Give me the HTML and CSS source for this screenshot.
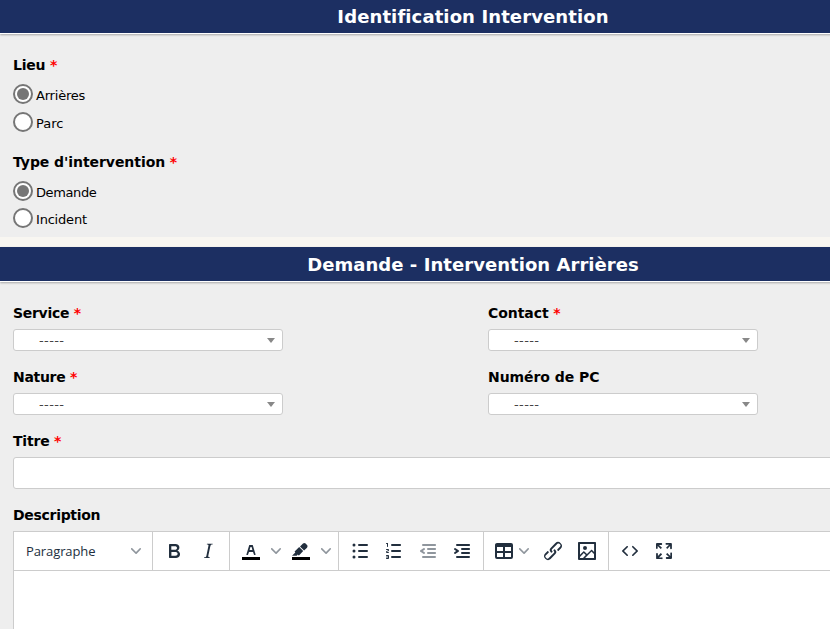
FILE: index.html
```html
<!DOCTYPE html>
<html lang="fr">
<head>
<meta charset="utf-8">
<title>Identification Intervention</title>
<link rel="stylesheet" href="styles.css">
</head>
<body>
<form class="page">
  <section class="panel panel-ident">
    <h2 class="bar bar-first"><span>Identification Intervention</span></h2>
    <div class="fields">
      <div class="label"><span class="snug">Lieu</span> <b class="req">*</b></div>
      <div class="choices">
        <label class="choice"><i class="radio on"></i><span>Arrières</span></label>
        <label class="choice"><i class="radio"></i><span class="wide">Parc</span></label>
      </div>
      <div class="label label-type"><span class="loose">Type d'intervention</span> <b class="req">*</b></div>
      <div class="choices">
        <label class="choice choice-short"><i class="radio on"></i><span class="tight">Demande</span></label>
        <label class="choice choice-short"><i class="radio"></i><span>Incident</span></label>
      </div>
    </div>
  </section>
  <section class="panel">
    <h2 class="bar"><span>Demande - Intervention Arrières</span></h2>
    <div class="fields">
      <div class="grid">
        <div class="field"><div class="label"><span>Service</span> <b class="req">*</b></div><div class="select">-----</div></div>
        <div class="field"><div class="label"><span class="loose">Contact</span> <b class="req">*</b></div><div class="select">-----</div></div>
        <div class="field"><div class="label"><span>Nature</span> <b class="req">*</b></div><div class="select">-----</div></div>
        <div class="field"><div class="label"><span class="loose">Numéro de PC</span></div><div class="select">-----</div></div>
      </div>
      <div class="label"><span class="snug">Titre</span> <b class="req">*</b></div>
      <div class="input"></div>
      <div class="label label-desc"><span>Description</span></div>
      <div class="editor">
        <div class="toolbar">
          <div class="group">
            <div class="format"><span>Paragraphe</span><svg class="chev" viewBox="0 0 10 10"><path d="M8.7 2.2c.3-.3.8-.3 1 0 .4.4.4.9 0 1.2L5.7 7.8c-.3.3-.9.3-1.2 0L.2 3.4a.8.8 0 010-1.2c.3-.3.8-.3 1.1 0L5 6l3.7-3.8z"/></svg></div>
          </div>
          <div class="group">
            <div class="btn"><svg viewBox="0 0 24 24"><path fill-rule="evenodd" d="M7.8 19c-.3 0-.5 0-.6-.2l-.2-.5V5.7c0-.2 0-.4.2-.5l.6-.2h5c1.5 0 2.7.3 3.5 1 .7.6 1.1 1.4 1.1 2.5a3 3 0 01-.6 1.9c-.4.6-1 1-1.6 1.2.4.1.9.3 1.3.6s.8.7 1 1.2c.4.4.5 1 .5 1.6 0 1.3-.4 2.3-1.3 3-.8.7-2.1 1-3.8 1H7.8zm5-8.3c.6 0 1.2-.1 1.6-.5.4-.3.6-.7.6-1.3 0-1.1-.8-1.7-2.3-1.7H9.3v3.5h3.4zm.5 6c.7 0 1.3-.1 1.7-.4.4-.4.6-.9.6-1.5s-.2-1-.7-1.4c-.4-.3-1-.4-2-.4H9.4v3.8h4z"/></svg></div>
            <div class="btn"><svg viewBox="0 0 24 24"><path d="M16.7 4.7l-.1.9h-.3c-.6 0-1 0-1.4.3-.3.3-.4.6-.5 1.1l-2.1 9.8v.6c0 .5.4.8 1.4.8h.2l-.2.8H8l.2-.8h.2c1.1 0 1.8-.5 2-1.5l2-9.8.1-.5c0-.6-.4-.8-1.4-.8h-.3l.2-.9h5.8z"/></svg></div>
          </div>
          <div class="group">
            <div class="btn"><svg viewBox="0 0 24 24"><path fill="#000" d="M3 18h18v3H3z"/><path fill-rule="evenodd" d="M8.7 16h-.8a.5.5 0 01-.5-.6l2.7-9c.1-.3.3-.4.5-.4h2.8c.2 0 .4.1.5.4l2.7 9a.5.5 0 01-.5.6h-.8a.5.5 0 01-.4-.4l-.7-2.2c0-.3-.3-.4-.5-.4h-3.4c-.2 0-.4.1-.5.4l-.7 2.2c0 .3-.2.4-.4.4zm2.6-7.6l-.6 2a.5.5 0 00.5.6h1.6a.5.5 0 00.5-.6l-.6-2c0-.3-.3-.4-.5-.4h-.4c-.2 0-.4.1-.5.4z"/></svg></div>
            <div class="arrow"><svg class="chev" viewBox="0 0 10 10"><path d="M8.7 2.2c.3-.3.8-.3 1 0 .4.4.4.9 0 1.2L5.7 7.8c-.3.3-.9.3-1.2 0L.2 3.4a.8.8 0 010-1.2c.3-.3.8-.3 1.1 0L5 6l3.7-3.8z"/></svg></div>
            <div class="btn"><svg viewBox="0 0 24 24"><path fill="#000" d="M3 18h18v3H3z"/><path d="M7.700 16.700H3l3.300-3.300-.7-.8L10.200 8l4 4.100-4 4.200c-.2.2-.6.2-.8 0l-.6-.7-1.100 1.100zm5-7.500L11 7.400l3-2.900a2 2 0 012.600 0L18 6c.7.7.7 2 0 2.700l-2.900 2.900-1.800-1.800-.5-.6z"/></svg></div>
            <div class="arrow"><svg class="chev" viewBox="0 0 10 10"><path d="M8.7 2.2c.3-.3.8-.3 1 0 .4.4.4.9 0 1.2L5.7 7.8c-.3.3-.9.3-1.2 0L.2 3.4a.8.8 0 010-1.2c.3-.3.8-.3 1.1 0L5 6l3.7-3.8z"/></svg></div>
          </div>
          <div class="group">
            <div class="btn"><svg viewBox="0 0 24 24"><path d="M11 5h8a1 1 0 010 2h-8a1 1 0 010-2zm0 6h8a1 1 0 010 2h-8a1 1 0 010-2zm0 6h8a1 1 0 010 2h-8a1 1 0 010-2z"/><circle cx="6" cy="6" r="1.5"/><circle cx="6" cy="12" r="1.5"/><circle cx="6" cy="18" r="1.5"/></svg></div>
            <div class="btn"><svg viewBox="0 0 24 24"><path d="M10 17h8c.6 0 1 .4 1 1s-.4 1-1 1h-8a1 1 0 010-2zm0-6h8c.6 0 1 .4 1 1s-.4 1-1 1h-8a1 1 0 010-2zm0-6h8c.6 0 1 .4 1 1s-.4 1-1 1h-8a1 1 0 110-2zM6 4v3.5c0 .3-.2.5-.5.5a.5.5 0 01-.5-.5V5h-.5a.5.5 0 010-1H6zm-1 8.8l.2.2h1.3c.3 0 .5.2.5.5s-.2.5-.5.5H4.9a1 1 0 01-.9-1V13c0-.4.3-.8.6-1l1.2-.4.2-.3a.2.2 0 00-.2-.2H4.5a.5.5 0 01-.5-.5c0-.3.2-.5.5-.5h1.6c.5 0 .9.4.9 1v.1c0 .4-.3.8-.6 1l-1.2.4-.2.3zM7 17v2c0 .6-.4 1-1 1H4.5a.5.5 0 010-1h1.2c.2 0 .3-.1.3-.3 0-.2-.1-.3-.3-.3H4.4a.4.4 0 110-.8h1.3c.2 0 .3-.1.3-.3 0-.2-.1-.3-.3-.3H4.5a.5.5 0 110-1H6c.6 0 1 .4 1 1z"/></svg></div>
            <div class="btn off"><svg viewBox="0 0 24 24"><path d="M7 5h12c.6 0 1 .4 1 1s-.4 1-1 1H7a1 1 0 110-2zm5 4h7c.6 0 1 .4 1 1s-.4 1-1 1h-7a1 1 0 010-2zm0 4h7c.6 0 1 .4 1 1s-.4 1-1 1h-7a1 1 0 010-2zm-5 4h12a1 1 0 010 2H7a1 1 0 010-2zm1.6-3.8a1 1 0 01-1.2 1.6l-3-2a1 1 0 010-1.6l3-2a1 1 0 011.2 1.6L6.8 12l1.8 1.2z"/></svg></div>
            <div class="btn"><svg viewBox="0 0 24 24"><path d="M7 5h12c.6 0 1 .4 1 1s-.4 1-1 1H7a1 1 0 110-2zm5 4h7c.6 0 1 .4 1 1s-.4 1-1 1h-7a1 1 0 010-2zm0 4h7c.6 0 1 .4 1 1s-.4 1-1 1h-7a1 1 0 010-2zm-5 4h12a1 1 0 010 2H7a1 1 0 010-2zm-2.6-3.8L6.2 12l-1.8-1.2a1 1 0 011.2-1.6l3 2a1 1 0 010 1.6l-3 2a1 1 0 11-1.2-1.6z"/></svg></div>
          </div>
          <div class="group">
            <div class="btn btn-menu"><svg viewBox="0 0 24 24"><path fill-rule="evenodd" d="M19 4a2 2 0 012 2v12a2 2 0 01-2 2H5a2 2 0 01-2-2V6c0-1.100.9-2 2-2h14zM5 14v4h6v-4H5zm14 0h-6v4h6v-4zm0-6h-6v4h6V8zM5 12h6V8H5v4z"/></svg><svg class="chev" viewBox="0 0 10 10"><path d="M8.7 2.2c.3-.3.8-.3 1 0 .4.4.4.9 0 1.2L5.7 7.8c-.3.3-.9.3-1.2 0L.2 3.4a.8.8 0 010-1.2c.3-.3.8-.3 1.1 0L5 6l3.7-3.8z"/></svg></div>
            <div class="btn"><svg viewBox="0 0 24 24"><path d="M6.2 12.3a1 1 0 011.4 1.4l-2.1 2a2 2 0 102.7 2.8l4.8-4.8a1 1 0 000-1.400 1 1 0 111.4-1.3 2.9 2.9 0 010 4L9.600 20a3.9 3.9 0 01-5.5-5.5l2-2zm11.600-.6a1 1 0 01-1.4-1.4l2-2a2 2 0 10-2.6-2.8L11 10.3a1 1 0 000 1.4A1 1 0 119.6 13a2.9 2.9 0 010-4L14.400 4a3.9 3.9 0 015.5 5.5l-2 2z"/></svg></div>
            <div class="btn"><svg viewBox="0 0 24 24"><path fill-rule="evenodd" d="M5 15.7l3.3-3.2c.3-.3.7-.3 1 0L12 15l4.1-4c.3-.4.8-.4 1 0l2 1.900V5H5v10.7zM5 18V19h3l2.8-2.9-2-2L5 17.9zm14-3l-2.5-2.4-6.4 6.5H19v-4zM4 3h16c.6 0 1 .4 1 1v16c0 .6-.4 1-1 1H4a1 1 0 01-1-1V4c0-.6.4-1 1-1zm6 8a2 2 0 100-4 2 2 0 000 4z"/></svg></div>
          </div>
          <div class="group group-last">
            <div class="btn"><svg viewBox="0 0 24 24"><path d="M9.8 15.7c.3.3.3.8 0 1-.3.4-.9.4-1.2 0l-4.400-4.1a.8.8 0 010-1.2l4.400-4.2c.3-.3.9-.3 1.2 0 .3.3.3.8 0 1.100L6 12l3.8 3.7zM14.2 15.7c-.3.3-.3.8 0 1 .4.4.9.4 1.2 0l4.400-4.1c.3-.3.3-.9 0-1.2l-4.400-4.2a.8.8 0 00-1.2 0c-.3.3-.3.8 0 1.100L18 12l-3.8 3.7z"/></svg></div>
            <div class="btn"><svg viewBox="0 0 24 24"><path d="M15.3 10l-1.2-1.3 2.9-3h-2.3a.9.9 0 110-1.7H19c.5 0 .9.4.9.9v4.400a.9.9 0 11-1.8 0V7l-2.9 3zm0 4l3 3v-2.3a.9.9 0 111.7 0V19c0 .5-.4.9-.9.9h-4.400a.9.9 0 110-1.8H17l-3-2.9 1.3-1.2zM10 15.4l-2.9 3h2.3a.9.9 0 110 1.7H5a.9.9 0 01-.9-.9v-4.400a.9.9 0 111.8 0V17l2.9-3 1.2 1.3zM8.7 10L5.7 7v2.3a.9.9 0 01-1.7 0V5c0-.5.4-.9.9-.9h4.400a.9.9 0 010 1.8H7l3 2.9-1.3 1.2z"/></svg></div>
          </div>
        </div>
        <div class="text-area"></div>
      </div>
    </div>
  </section>
</form>
</body>
</html>
```
FILE: styles.css
```css
* { box-sizing: border-box; }
html { overflow: hidden; }
body {
  margin: 0;
  height: 629px;
  overflow: hidden;
  background: #f8f6f1;
  color: #000;
  font-family: Verdana, "DejaVu Sans", sans-serif;
}
.page { width: 946px; }
.panel { background: #eee; }
.panel-ident { height: 237px; margin-bottom: 10px; }
.bar {
  display: flex;
  justify-content: center;
  height: 35px;
  margin: 0;
  border-bottom: 1px solid #fff;
  background: #1c2f62;
  box-shadow: 0 1px 2px rgba(0, 0, 0, .3);
  color: #fff;
  font-size: 18px;
  font-weight: 700;
  letter-spacing: .05px;
  line-height: 36px;
}
.bar-first { height: 34px; letter-spacing: .11px; line-height: 33px; }
.fields { padding: 19px 13px 0; }
.label {
  height: 24px;
  font-size: 14px;
  font-weight: 700;
  letter-spacing: -.3px;
  line-height: 24px;
  white-space: pre;
}
.label .loose { letter-spacing: -.06px; }
.label .snug { letter-spacing: -.2px; }
.req { color: #f00; font-weight: 700; }
.choices { padding-top: 3px; }
.choice {
  display: flex;
  align-items: center;
  gap: 3px;
  height: 28px;
  font-size: 13px;
  letter-spacing: -.2px;
}
.choice span { padding-top: 3px; }
.choice .wide { letter-spacing: 0; }
.choice .tight { letter-spacing: -.4px; }
.choice-short { height: 27px; }
.label-type { margin-top: 14px; }
.radio {
  display: flex;
  width: 20px;
  height: 20px;
  border: 2px solid #767676;
  border-radius: 50%;
  background: #fff;
}
.radio.on::before {
  content: "";
  width: 12px;
  height: 12px;
  margin: 2px;
  border-radius: 50%;
  background: #767676;
}
.grid { display: grid; grid-template-columns: 475px 270px; }
.field { height: 64px; }
.select {
  display: flex;
  align-items: center;
  justify-content: space-between;
  width: 270px;
  height: 22px;
  margin-top: 4px;
  padding: 0 7px 0 25px;
  border: 1px solid #ccc;
  border-radius: 3px;
  background: #fff;
  color: #444;
  font-size: 13px;
  letter-spacing: .4px;
}
.select::after {
  content: "";
  border: 4px solid transparent;
  border-top: 5px solid #888;
  border-bottom: 0;
}
.input {
  height: 32px;
  margin-top: 4px;
  border: 1px solid #ccc;
  border-radius: 3px;
  background: #fff;
}
.label-desc { margin-top: 14px; }
.editor {
  margin-top: 4px;
  border: 1px solid #ccc;
  border-bottom: 0;
  background: #fff;
}
.toolbar { display: flex; height: 39px; border-bottom: 1px solid #ccc; }
.group { display: flex; align-items: center; padding: 0 4px; border-right: 1px solid #ccc; }
.group-last { border-right: 0; }
.btn { display: flex; align-items: center; justify-content: center; width: 34px; height: 34px; }
.btn svg { width: 24px; height: 24px; fill: #222f3e; }
.off svg { opacity: .5; }
.arrow { display: flex; align-items: center; justify-content: center; width: 16px; }
.chev, .btn .chev { width: 10px; height: 10px; fill: #222f3e; opacity: .5; }
.btn-menu { justify-content: flex-start; gap: 3px; width: 48px; padding-left: 4px; }
.format {
  display: flex;
  align-items: center;
  justify-content: space-between;
  width: 130px;
  padding: 0 7px 0 8px;
  color: #222f3e;
  font: 13px "Open Sans", "Noto Sans", sans-serif;
  letter-spacing: -.1px;
}
.text-area { height: 58px; }
```
